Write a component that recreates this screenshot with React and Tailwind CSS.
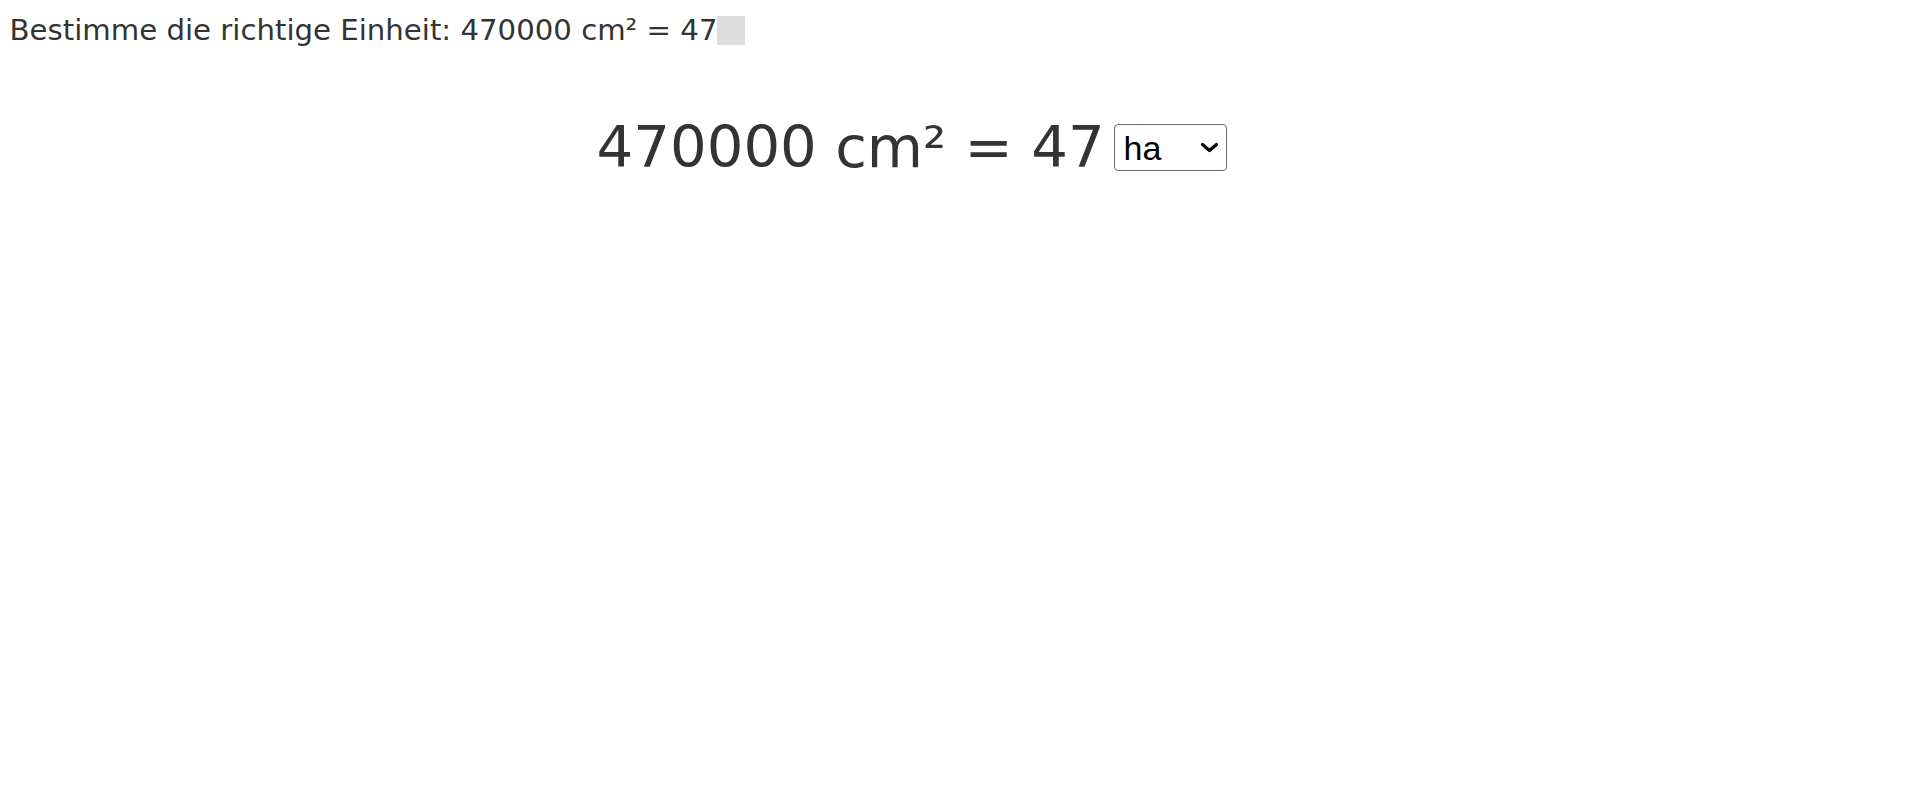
const font = { fontFamily: '"DejaVu Sans", Verdana, sans-serif' };

const UnitSelect = () => (
    <div className="relative ml-[9px] h-[47px] w-[113px]">
        <select
            defaultValue="ha"
            className="block h-full w-full appearance-none rounded-[4px] border border-[#6b6b6b] bg-white pl-[9px] text-[34px] leading-none text-black font-['Liberation_Sans',Arial,sans-serif]"
        >
            <option value="mm²">mm²</option>
            <option value="cm²">cm²</option>
            <option value="dm²">dm²</option>
            <option value="m²">m²</option>
            <option value="a">a</option>
            <option value="ha">ha</option>
            <option value="km²">km²</option>
        </select>
        {/* dropdown chevron */}
        <svg
            className="pointer-events-none absolute right-[8px] top-[18px] h-[11px] w-[19px]"
            viewBox="0 0 19 11"
            fill="none"
            stroke="black"
            strokeWidth={3.2}
            strokeLinecap="round"
            strokeLinejoin="round"
        >
            <path d="M2.5 2.5L9.5 8.5L16.5 2.5" />
        </svg>
    </div>
);

export default function App() {
    return (
        <div className="min-h-screen bg-white pl-[9.6px] pt-[13px] text-[#333]" style={font}>
            <div className="flex items-center text-[29.2px] leading-[34px]">
                <span>Bestimme die richtige Einheit: 470000 cm² = 47</span>
                <span className="inline-block h-[29px] w-[28px] bg-[#dddddd]" />
            </div>

            <div className="mt-[67px] flex items-center pl-[587px] text-[57.7px] leading-[67px]">
                <span>470000 cm² = 47</span>
                <UnitSelect />
            </div>
        </div>
    );
}
